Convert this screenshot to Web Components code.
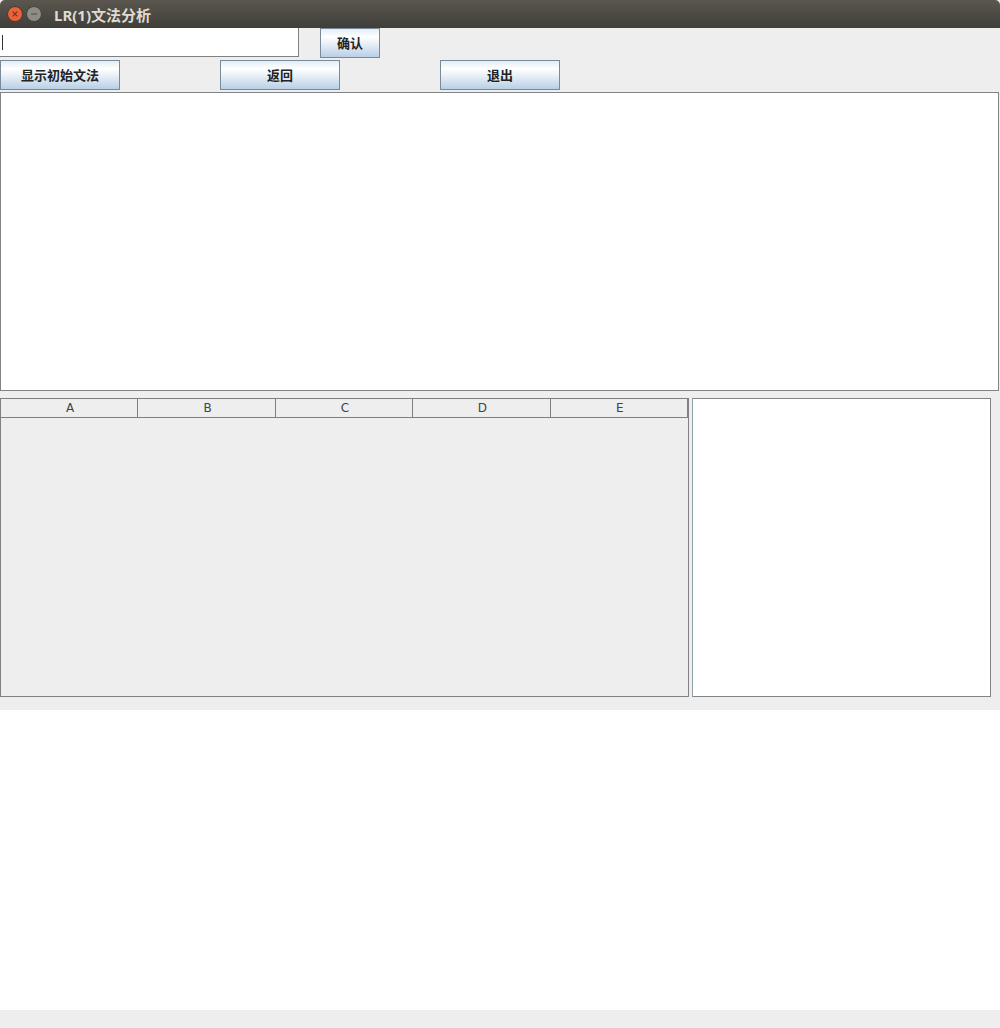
<!DOCTYPE html>
<html>
<head>
<meta charset="utf-8">
<title>LR(1)文法分析</title>
<style>
    html, body {
        margin: 0;
        padding: 0;
        background: #eeeeee;
    }
    body {
        width: 1000px;
        height: 1028px;
        overflow: hidden;
        display: flex;
        flex-direction: column;
    }
    .row {
        display: flex;
        align-items: flex-start;
    }
    #input-row { height: 32px; }
    #input-row swing-input { margin-right: 21px; }
    #button-row { height: 32px; gap: 100px; }
    #split-row { margin-top: 7px; gap: 3px; }
    #output-area { margin-top: 13px; }
</style>
</head>
<body>

<app-titlebar>LR(1)文法分析</app-titlebar>

<div class="row" id="input-row">
    <swing-input></swing-input>
    <swing-button style="width:60px">确认</swing-button>
</div>

<div class="row" id="button-row">
    <swing-button style="width:120px">显示初始文法</swing-button>
    <swing-button style="width:120px">返回</swing-button>
    <swing-button style="width:120px">退出</swing-button>
</div>

<text-pane style="width:999px;height:299px"></text-pane>

<div class="row" id="split-row">
    <swing-table columns="A,B,C,D,E"></swing-table>
    <text-pane style="width:299px;height:299px;border-left-color:#8fa3ad"></text-pane>
</div>

<text-pane id="output-area" style="width:1000px;height:300px;border:0"></text-pane>

<script>
class AppTitlebar extends HTMLElement {
    constructor() {
        super();
        this.attachShadow({mode: 'open'});
        this.shadowRoot.innerHTML = `
            <style>
                :host {
                    display: flex;
                    align-items: center;
                    box-sizing: border-box;
                    height: 28px;
                    flex: none;
                    padding: 0 0 0 7px;
                    background: linear-gradient(#5b574f, #3f3e39);
                    border-radius: 5px 5px 0 0;
                    font: bold 15px "Noto Sans", "Noto Sans CJK SC", sans-serif;
                    color: #dfdbd2;
                }
                .btns {
                    display: flex;
                    gap: 3px;
                    margin-right: 12px;
                }
                svg { display: block; }
                .label { margin-top: 1px; }
            </style>
            <div class="btns">
                <svg width="16" height="16" viewBox="0 0 16 16">
                    <circle cx="8" cy="8" r="7.5" fill="#e9623a" stroke="#4a3a30"/>
                    <path d="M5.7 5.7l4.6 4.6M10.3 5.7l-4.6 4.6" stroke="#7a3418" stroke-width="1.2"/>
                </svg>
                <svg width="16" height="16" viewBox="0 0 16 16">
                    <circle cx="8" cy="8" r="7.5" fill="#8f8c83" stroke="#45433d"/>
                    <path d="M5 8h6" stroke="#5a5850" stroke-width="1.2"/>
                </svg>
            </div>
            <span class="label"><slot></slot></span>
        `;
    }
}

class SwingButton extends HTMLElement {
    constructor() {
        super();
        this.attachShadow({mode: 'open'});
        this.shadowRoot.innerHTML = `
            <style>
                :host {
                    display: flex;
                    align-items: center;
                    justify-content: center;
                    box-sizing: border-box;
                    height: 30px;
                    flex: none;
                    padding-bottom: 2px;
                    border: 1px solid #7a8a99;
                    background: linear-gradient(#e3edf5 0%, #ffffff 28%, #e6eef6 55%, #b8cfe5 100%);
                    font: bold 13px "Noto Sans CJK SC", sans-serif;
                    color: #222222;
                }
            </style>
            <slot></slot>
        `;
    }
}

class SwingInput extends HTMLElement {
    constructor() {
        super();
        this.attachShadow({mode: 'open'});
        this.shadowRoot.innerHTML = `
            <style>
                :host {
                    display: block;
                    box-sizing: border-box;
                    width: 299px;
                    height: 29px;
                    flex: none;
                    background: #ffffff;
                    border: 1px solid #808080;
                    border-width: 0 1px 1px 0;
                    padding: 7px 0 0 2px;
                }
                .caret {
                    width: 1px;
                    height: 15px;
                    background: #333333;
                }
            </style>
            <div class="caret"></div>
        `;
    }
}

class TextPane extends HTMLElement {
    constructor() {
        super();
        this.attachShadow({mode: 'open'});
        this.shadowRoot.innerHTML = `
            <style>
                :host {
                    display: block;
                    box-sizing: border-box;
                    flex: none;
                    background: #ffffff;
                    border: 1px solid #808487;
                }
            </style>
            <slot></slot>
        `;
    }
}

class SwingTable extends HTMLElement {
    constructor() {
        super();
        this.attachShadow({mode: 'open'});
        const cols = this.getAttribute('columns').split(',');
        this.shadowRoot.innerHTML = `
            <style>
                :host {
                    display: block;
                    box-sizing: border-box;
                    width: 689px;
                    height: 299px;
                    flex: none;
                    background: #eeeeee;
                    border: 1px solid #808080;
                }
                .head {
                    display: grid;
                    grid-template-columns: repeat(5, 1fr);
                    height: 19px;
                    box-sizing: border-box;
                    border-bottom: 1px solid #808080;
                }
                .head div {
                    display: flex;
                    align-items: center;
                    justify-content: center;
                    padding-left: 2px;
                    border-right: 1px solid #808080;
                    font: 12px "DejaVu Sans", sans-serif;
                    color: #444444;
                }
            </style>
            <div class="head">${cols.map(c => `<div>${c}</div>`).join('')}</div>
        `;
    }
}

customElements.define('app-titlebar', AppTitlebar);
customElements.define('swing-button', SwingButton);
customElements.define('swing-input', SwingInput);
customElements.define('text-pane', TextPane);
customElements.define('swing-table', SwingTable);
</script>
</body>
</html>
